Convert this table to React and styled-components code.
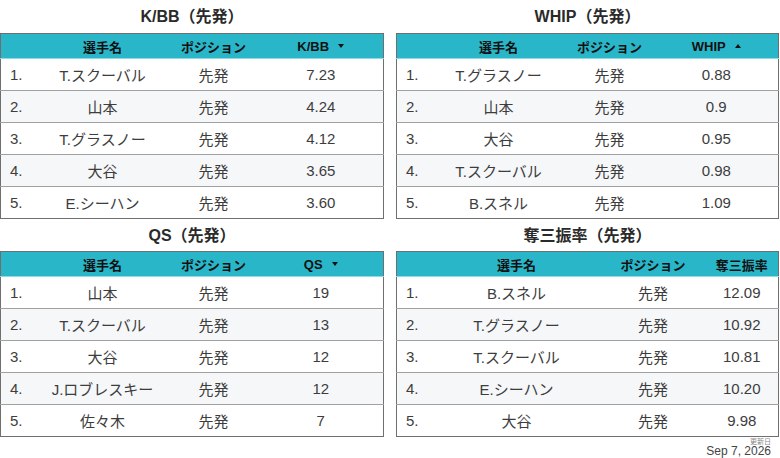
import React from 'react'
import styled, {createGlobalStyle} from "styled-components";

const GlobalStyle = createGlobalStyle`
    body {
        margin: 0;
        background: #fff;
        font-family: "Liberation Sans", Arial, "Noto Sans CJK JP", sans-serif;
    }
`;

const Page = styled.div`
    width: 780px;
    box-sizing: border-box;
    padding-right: 1px;
`;

const Grid = styled.div`
    display: grid;
    grid-template-columns: 384px 383px;
    column-gap: 12px;
`;

const Block = styled.section`
    display: flex;
    flex-direction: column;
`;

const Title = styled.h2`
    margin: 0;
    height: ${p => p.$lower ? '32px' : '33px'};
    line-height: ${p => p.$lower ? '34px' : '33px'};
    text-align: center;
    font-size: 16px;
    font-weight: bold;
    color: #2a2a2a;
`;

const Table = styled.table`
    width: 100%;
    border-collapse: collapse;
    table-layout: fixed;
    border: 1px solid #6f6f6f;
    font-size: 15px;
    color: #3d3d3d;
`;

const HeadRow = styled.tr`
    background: #2ab6c9;
    height: 25px;
    border-bottom: 1px solid #8fdbe5;
`;

const Th = styled.th`
    font-size: 13px;
    font-weight: bold;
    color: #111;
    text-align: center;
    padding: 0;
    white-space: nowrap;
`;

const Arrow = styled.span`
    display: inline-block;
    margin-left: 9px;
    vertical-align: middle;
    width: 0;
    height: 0;
    border-left: 3px solid transparent;
    border-right: 3px solid transparent;
    ${p => p.$up
        ? 'border-bottom: 4px solid #111; margin-top: -3px;'
        : 'border-top: 4px solid #111; margin-top: -2px;'}
`;

const Row = styled.tr`
    height: 31px;
    background: ${p => p.$alt ? '#f6f7f9' : '#fff'};
    border-top: 1px solid #a0a0a0;
`;

const Td = styled.td`
    padding: 0;
    height: 31px;
    text-align: ${p => p.$left ? 'left' : 'center'};
    padding-left: ${p => p.$left ? '9px' : '0'};
    white-space: nowrap;
`;

const Footer = styled.div`
    display: flex;
    flex-direction: column;
    align-items: flex-end;
    padding: 1px 8px 0 0;
    color: #555;
`;

const Small = styled.span`
    font-size: 7px;
    line-height: 7px;
    color: #888;
`;

const DateText = styled.span`
    font-size: 12px;
    line-height: 13px;
    color: #444;
`;

const NARROW = [36, 132, 90, null];
const WIDE = [36, 168, 105, null];

const tables = [
    {
        title: 'K/BB（先発）', stat: 'K/BB', arrow: 'down', cols: NARROW,
        rows: [['T.スクーバル', '7.23'], ['山本', '4.24'], ['T.グラスノー', '4.12'], ['大谷', '3.65'], ['E.シーハン', '3.60']],
    },
    {
        title: 'WHIP（先発）', stat: 'WHIP', arrow: 'up', cols: NARROW,
        rows: [['T.グラスノー', '0.88'], ['山本', '0.9'], ['大谷', '0.95'], ['T.スクーバル', '0.98'], ['B.スネル', '1.09']],
    },
    {
        title: 'QS（先発）', stat: 'QS', arrow: 'down', cols: NARROW,
        rows: [['山本', '19'], ['T.スクーバル', '13'], ['大谷', '12'], ['J.ロブレスキー', '12'], ['佐々木', '7']],
    },
    {
        title: '奪三振率（先発）', stat: '奪三振率', cols: WIDE,
        rows: [['B.スネル', '12.09'], ['T.グラスノー', '10.92'], ['T.スクーバル', '10.81'], ['E.シーハン', '10.20'], ['大谷', '9.98']],
    },
];

const RankTable = ({data, lower}) => <Block>
    <Title $lower={lower}>{data.title}</Title>
    <Table>
        <colgroup>
            {data.cols.map((w, i) => <col key={i} style={w ? {width: w} : undefined}/>)}
        </colgroup>
        <thead>
            <HeadRow>
                <Th/>
                <Th>選手名</Th>
                <Th>ポジション</Th>
                <Th>{data.stat}{data.arrow && <Arrow $up={data.arrow === 'up'}/>}</Th>
            </HeadRow>
        </thead>
        <tbody>
            {data.rows.map((r, i) => <Row key={i} $alt={i % 2 === 1}>
                <Td $left>{i + 1}.</Td>
                <Td>{r[0]}</Td>
                <Td>先発</Td>
                <Td>{r[1]}</Td>
            </Row>)}
        </tbody>
    </Table>
</Block>;

const App = () => <Page>
    <GlobalStyle/>
    <Grid>
        {tables.map((t, i) => <RankTable key={i} data={t} lower={i > 1}/>)}
    </Grid>
    <Footer>
        <Small>更新日</Small>
        <DateText>Sep 7, 2026</DateText>
    </Footer>
</Page>;

export default App;
